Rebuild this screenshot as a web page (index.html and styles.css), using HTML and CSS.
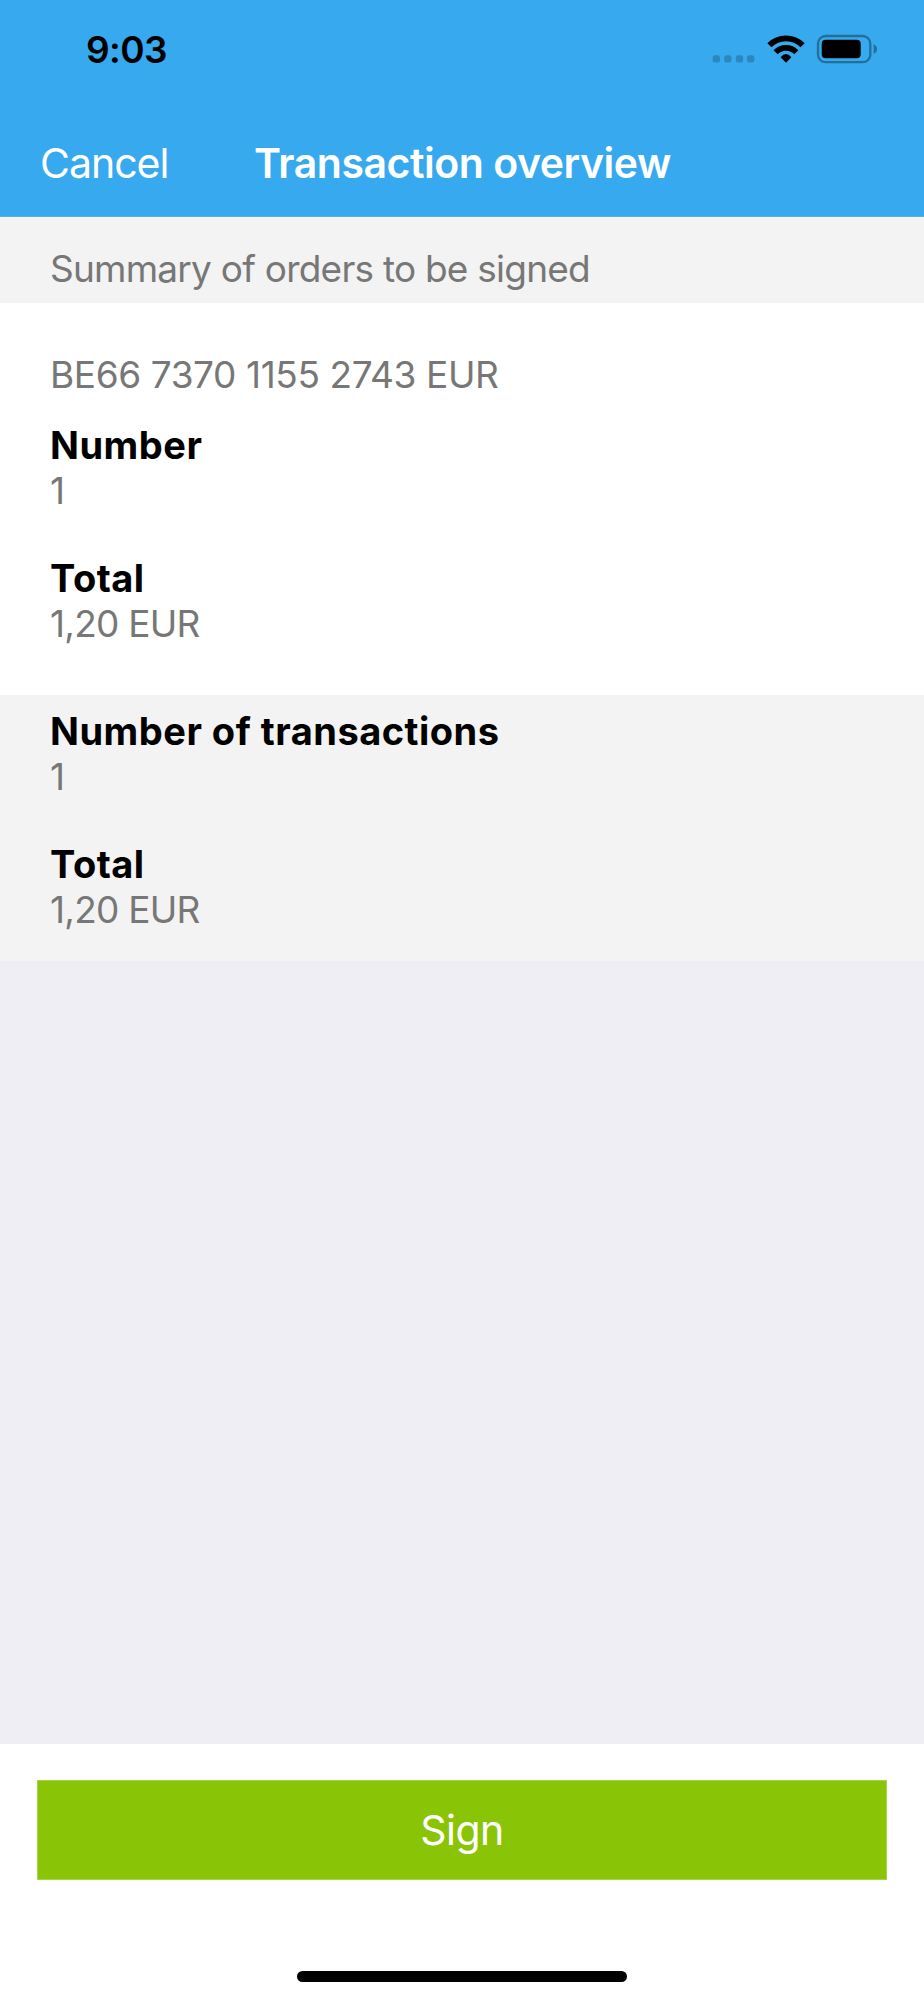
FILE: index.html
```html
<!DOCTYPE html>
<html lang="en">
<head>
<meta charset="utf-8">
<title>Transaction overview</title>
<link rel="stylesheet" href="styles.css">
</head>
<body>
<div class="screen">
  <header class="header">
    <div class="status">
      <span class="time">9:03</span>
      <svg class="status-icons" width="170" height="40" viewBox="0 0 170 40">
        <g fill="#2b87be"><rect x="2.700" y="26.200" width="7.300" height="7.300" rx="2.500"/><rect x="14.200" y="26.200" width="7.300" height="7.300" rx="2.500"/><rect x="25.800" y="26.200" width="7.300" height="7.300" rx="2.500"/><rect x="37" y="26.200" width="7.300" height="7.300" rx="2.500"/></g>
        <g fill="none" stroke="#000" stroke-width="5.800"><path d="M59.400 16.200A23.500 23.500 0 0 1 92.600 16.200"/><path d="M65.600 23.200A14.500 14.500 0 0 1 86.400 23.200"/></g>
        <path d="M70.600 28.200Q76 21.800 81.400 28.200L76 33.700Z"/>
        <rect x="108" y="7" width="52.300" height="26.200" rx="7.500" fill="none" stroke="#236f9b" stroke-width="2.300"/>
        <rect x="111.700" y="10.800" width="39" height="18.500" rx="4"/>
        <path d="M163.700 15.300Q167 16.800 167 20.100Q167 23.400 163.700 25Z" fill="#236f9b"/>
      </svg>
    </div>
    <nav class="nav"><span class="cancel">Cancel</span><h1 class="title">Transaction overview</h1></nav>
  </header>
  <div class="summary">Summary of orders to be signed</div>
  <section class="orders">
    <div class="account value">BE66 7370 1155 2743 EUR</div>
    <dl class="list"><dt>Number</dt><dd class="value">1</dd><dt>Total</dt><dd class="value">1,20 EUR</dd></dl>
  </section>
  <section class="totals">
    <dl class="list"><dt>Number of transactions</dt><dd class="value">1</dd><dt>Total</dt><dd class="value">1,20 EUR</dd></dl>
  </section>
  <footer class="footer"><button class="sign">Sign</button><div class="home"></div></footer>
</div>
</body>
</html>
```
FILE: styles.css
```css
* { box-sizing: border-box; }
body { margin: 0; font-family: Inter, sans-serif; color: #000; }
.screen { width: 924px; height: 2000px; display: flex; flex-direction: column; background: #efeef4; }
.header { height: 217px; background: #37a9ee; box-shadow: inset 0 -1px #5facdb; }
.status { height: 110px; padding: 29px 44px 0 86px; display: flex; justify-content: space-between; }
.time { font-size: 37px; font-weight: 600; line-height: 42px; letter-spacing: -0.6px; }
.nav { height: 107px; padding-left: 40px; display: grid; grid-template-columns: 214px 1fr; color: #fff; line-height: 106px; }
.cancel { font-size: 41px; letter-spacing: -1px; }
.title { margin: 0; font-size: 41px; font-weight: 600; letter-spacing: -0.47px; white-space: nowrap; }
.summary { height: 86px; padding: 31px 50px 0; background: #f3f3f3; color: #777; font-size: 37px; line-height: 42px; letter-spacing: -0.77px; }
.orders { height: 392px; padding: 50px 50px 0; background: #fff; }
.value { color: #777; font-size: 37px; line-height: 44px; letter-spacing: -0.75px; }
.account { height: 70px; letter-spacing: -0.4px; }
.totals { height: 266px; padding: 14px 50px 0; background: #f3f3f3; }
.list { margin: 0; }
.list dt { font-size: 38px; font-weight: 700; line-height: 44px; letter-spacing: 0.5px; }
.list dd { margin: 0 0 43px; padding-top: 2px; }
.footer { height: 256px; margin-top: auto; padding: 36px 37px 0; background: #fff; }
.sign { display: block; width: 850px; height: 100px; border: 1px solid #a5d445; padding: 0; background: #8ac407; color: #fff; font: 41px Inter, sans-serif; letter-spacing: -0.5px; }
.home { width: 330px; height: 11px; margin: 91px auto 0; border-radius: 6px; background: #000; }
```
